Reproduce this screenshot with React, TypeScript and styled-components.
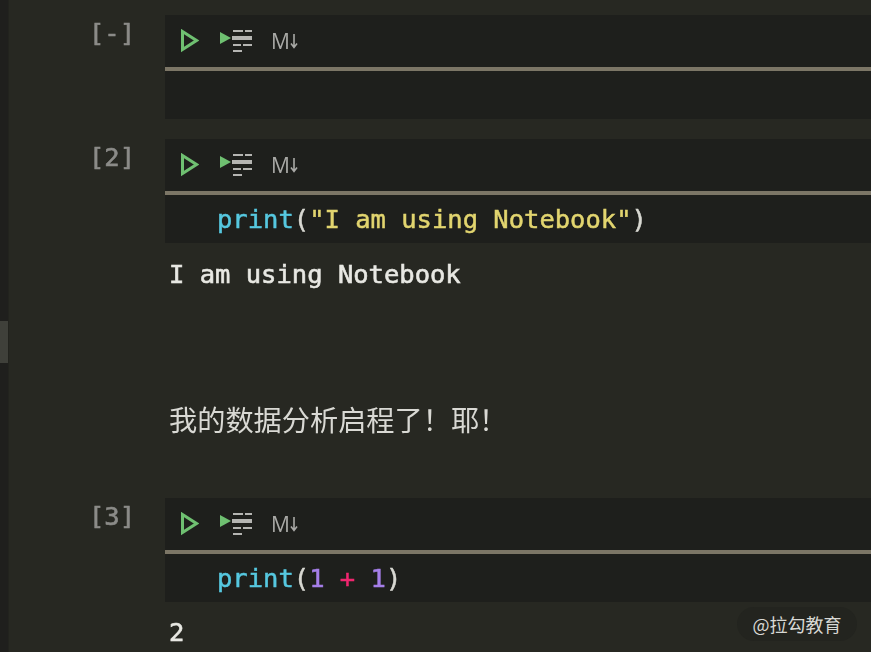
import React from 'react';
import styled, { createGlobalStyle } from 'styled-components';

const GlobalStyle = createGlobalStyle`
  html, body {
    margin: 0;
    padding: 0;
    background: #272822;
    overflow: hidden;
  }
`;

const MONO = `"DejaVu Sans Mono", "Liberation Mono", monospace`;

const Page = styled.div`
  position: relative;
  display: flex;
  width: 871px;
  height: 652px;
  overflow: hidden;
  background: #272822;
`;

const ScrollTrack = styled.div`
  flex: 0 0 9px;
  height: 100%;
  background: #1f1f1d;
  border-right: 1px solid #22231e;
  box-sizing: border-box;
  padding-top: 321px;
`;

const ScrollThumb = styled.div`
  height: 42px;
  background: #3f403a;
`;

const Notebook = styled.div`
  flex: 1;
  display: flex;
  flex-direction: column;
  padding-top: 15px;
  min-width: 0;
`;

const Cell = styled.div<{ $before?: number; $after: number }>`
  display: grid;
  grid-template-columns: 156px 1fr;
  margin-top: ${(p) => p.$before ?? 0}px;
  margin-bottom: ${(p) => p.$after}px;
`;

const Prompt = styled.div`
  font: 400 25.5px/30px ${MONO};
  color: #8b8b88;
  -webkit-text-stroke: 0.6px #8b8b88;
  padding: 3px 0 0 80px;
  white-space: pre;
  filter: blur(0.35px);
`;

const Editor = styled.div`
  background: #1e1f1c;
`;

const Toolbar = styled.div`
  display: flex;
  align-items: center;
  height: 52px;
  padding-left: 16px;
  border-bottom: 4px solid #7c7666;
`;

const ToolIcon = styled.svg<{ $left?: number }>`
  display: block;
  flex: none;
  margin-left: ${(p) => p.$left ?? 0}px;
`;

const MdLabel = styled.span`
  display: flex;
  align-items: center;
  font: 400 21px/24px "Open Sans", "Liberation Sans", sans-serif;
  color: #a9a9a6;
  margin-left: 17px;
  filter: blur(0.3px);
`;

const Code = styled.div`
  height: 48px;
  padding-left: 52px;
  font: 400 25.5px/48px ${MONO};
  -webkit-text-stroke: 0.5px currentColor;
  white-space: pre;
  color: #d8d8d2;
  filter: blur(0.35px);
`;

const Token = styled.span<{ $color: string }>`
  color: ${(p) => p.$color};
`;

const Output = styled.div`
  padding-left: 160px;
  font: 400 25.5px/30px ${MONO};
  -webkit-text-stroke: 0.6px #e8e8e3;
  color: #e8e8e3;
  white-space: pre;
  filter: blur(0.35px);
`;

const Markdown = styled.div`
  margin-top: 112px;
  padding-left: 160px;
  font: 400 28.2px/36px "Noto Sans CJK SC", sans-serif;
  color: #d9d9d4;
  white-space: pre;
  filter: blur(0.3px);
`;

const Watermark = styled.div`
  position: absolute;
  left: 737px;
  top: 607px;
  width: 120px;
  height: 34px;
  border-radius: 17px;
  background: #23241f;
  color: #d8d8d4;
  font: 400 18px/34px "Noto Sans CJK SC", sans-serif;
  text-align: center;
`;

const GREEN = '#6fc071';
const CYAN = '#56c8e0';
const YELLOW = '#e2d56f';
const PURPLE = '#a57fe8';
const PINK = '#f0266f';

const CellToolbar = () => (
  <Toolbar>
    <ToolIcon width="18" height="24" viewBox="0 0 18 24">
      <path d="M1.5 2.5 L15.5 11.5 L1.5 20.5 Z" fill="none" stroke={GREEN} strokeWidth="3" />
    </ToolIcon>
    <ToolIcon $left={21} width="34" height="24" viewBox="0 0 34 24">
      <path d="M0 3 L11 9 L0 15 Z" fill={GREEN} />
      <path d="M13 2h10M25 2h7M13 16h8M23 16h9M13 22h9" stroke="#b5b5b2" strokeWidth="2" fill="none" />
      <path d="M12 9h20" stroke="#b5b5b2" strokeWidth="4" fill="none" />
    </ToolIcon>
    <MdLabel>
      M
      <ToolIcon width="8" height="16" viewBox="0 0 8 16">
        <path d="M4 1v13M1 10.5L4 14.5L7 10.5" fill="none" stroke="#a9a9a6" strokeWidth="1.6" />
      </ToolIcon>
    </MdLabel>
  </Toolbar>
);

export default function App() {
  return (
    <Page>
      <GlobalStyle />
      <ScrollTrack>
        <ScrollThumb />
      </ScrollTrack>
      <Notebook>
        <Cell $after={20}>
          <Prompt>[-]</Prompt>
          <Editor>
            <CellToolbar />
            <Code />
          </Editor>
        </Cell>
        <Cell $after={16}>
          <Prompt>[2]</Prompt>
          <Editor>
            <CellToolbar />
            <Code>
              <Token $color={CYAN}>print</Token>(<Token $color={YELLOW}>"I am using Notebook"</Token>)
            </Code>
          </Editor>
        </Cell>
        <Output>I am using Notebook</Output>
        <Markdown>我的数据分析启程了！耶！</Markdown>
        <Cell $before={61} $after={15}>
          <Prompt>[3]</Prompt>
          <Editor>
            <CellToolbar />
            <Code>
              <Token $color={CYAN}>print</Token>(<Token $color={PURPLE}>1</Token> <Token $color={PINK}>+</Token> <Token $color={PURPLE}>1</Token>)
            </Code>
          </Editor>
        </Cell>
        <Output>2</Output>
      </Notebook>
      <Watermark>@拉勾教育</Watermark>
    </Page>
  );
}
